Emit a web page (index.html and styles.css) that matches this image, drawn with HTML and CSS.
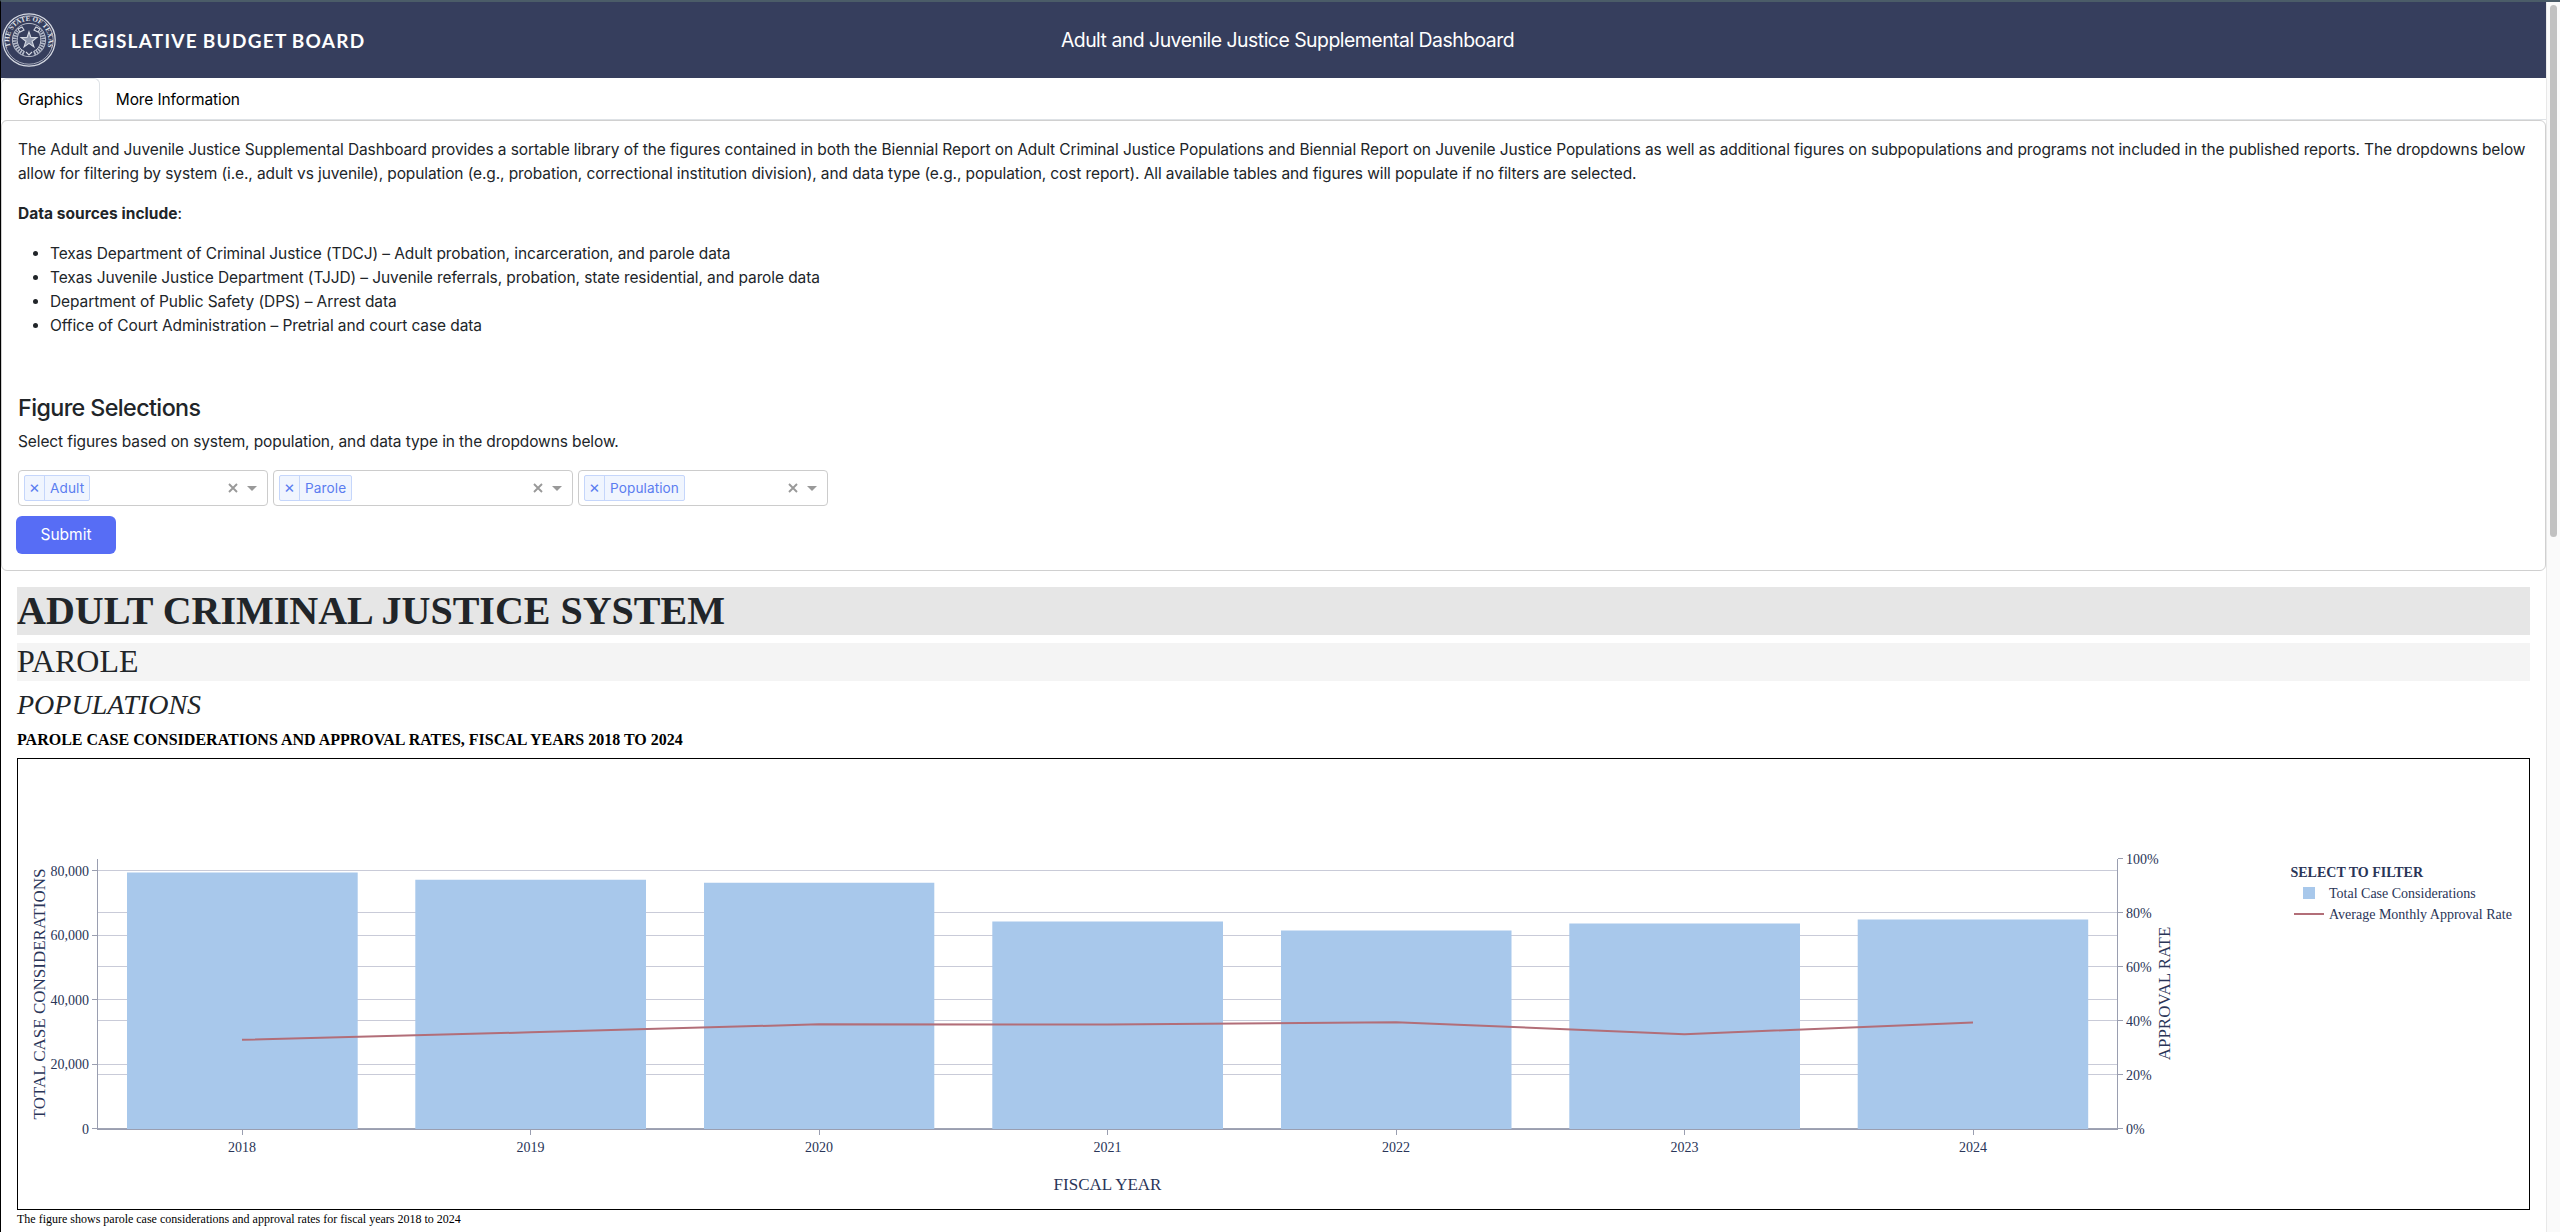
FILE: index.html
```html
<!DOCTYPE html>
<html lang="en">
<head>
<meta charset="utf-8">
<title>Adult and Juvenile Justice Supplemental Dashboard</title>
<link rel="stylesheet" href="styles.css">
</head>
<body>
<div class="app">
  <div class="content">
    <header class="header">
      <div class="brand">
        <svg class="seal" width="56" height="56" viewBox="0 0 56 56" fill="none" stroke="#d5d9e2">
          <circle cx="28" cy="28" r="26.2" stroke-width="1.3"/>
          <circle cx="28" cy="28" r="24.2" stroke-width=".7"/>
          <circle cx="28" cy="28" r="16.6" stroke-width=".8"/>
          <path d="M23 41.5C14 38 10.5 27 16.5 19M33 41.5C42 38 45.500 27 39.500 19" stroke-width="4" stroke-dasharray="1.6 1" stroke="#b4bac9"/>
          <path d="M23.500 39.500C16 36 14 27 18.500 20M32.500 39.500C40 36 42 27 37.500 20" stroke-width=".9"/>
          <path d="M17 17l4-2 2 3-4 2zM39 17l-4-2-2 3 4 2zM25 40l3 3 3-3" stroke-width="1.1"/>
          <path d="M28 19.800l1.900 5.700 6 .1-4.800 3.600 1.800 5.700-4.900-3.500-4.900 3.500 1.800-5.700-4.800-3.600 6-.1z" stroke-width="1.1" fill="#8d95ab"/>
          <path id="sealArc" d="M9.500 34.500A19.500 19.500 0 1 1 46.500 34.500" stroke="none"/>
          <text class="seal-text"><textPath href="#sealArc" textLength="74">THE STATE OF TEXAS</textPath></text>
        </svg>
        <span class="brand-name">LEGISLATIVE BUDGET BOARD</span>
      </div>
      <div class="header-title">Adult and Juvenile Justice Supplemental Dashboard</div>
    </header>

    <nav class="tabs">
      <a class="tab tab-active">Graphics</a>
      <a class="tab">More Information</a>
    </nav>

    <section class="card">
      <p>The Adult and Juvenile Justice Supplemental Dashboard provides a sortable library of the figures contained in both the Biennial Report on Adult Criminal Justice Populations and Biennial Report on Juvenile Justice Populations as well as additional figures on subpopulations and programs not included in the published reports. The dropdowns below allow for filtering by system (i.e., adult vs juvenile), population (e.g., probation, correctional institution division), and data type (e.g., population, cost report). All available tables and figures will populate if no filters are selected.</p>
      <p><strong>Data sources include</strong>:</p>
      <ul class="sources">
        <li>Texas Department of Criminal Justice (TDCJ) – Adult probation, incarceration, and parole data</li>
        <li>Texas Juvenile Justice Department (TJJD) – Juvenile referrals, probation, state residential, and parole data</li>
        <li>Department of Public Safety (DPS) – Arrest data</li>
        <li>Office of Court Administration – Pretrial and court case data</li>
      </ul>
      <h4 class="filters-title">Figure Selections</h4>
      <p>Select figures based on system, population, and data type in the dropdowns below.</p>
      <div class="filters">
        <div class="select">
          <span class="tag"><span class="tag-x">×</span><span class="tag-label">Adult</span></span>
          <svg class="controls" width="32" height="12" viewBox="0 0 32 12"><path d="M2 2l8 8M10 2l-8 8" stroke="#999" stroke-width="1.900"/><path d="M20 4h10l-5 5z" fill="#999"/></svg>
        </div>
        <div class="select select-wide">
          <span class="tag"><span class="tag-x">×</span><span class="tag-label">Parole</span></span>
          <svg class="controls" width="32" height="12" viewBox="0 0 32 12"><path d="M2 2l8 8M10 2l-8 8" stroke="#999" stroke-width="1.900"/><path d="M20 4h10l-5 5z" fill="#999"/></svg>
        </div>
        <div class="select">
          <span class="tag"><span class="tag-x">×</span><span class="tag-label">Population</span></span>
          <svg class="controls" width="32" height="12" viewBox="0 0 32 12"><path d="M2 2l8 8M10 2l-8 8" stroke="#999" stroke-width="1.900"/><path d="M20 4h10l-5 5z" fill="#999"/></svg>
        </div>
      </div>
      <button class="submit">Submit</button>
    </section>

    <main class="report">
      <h1>ADULT CRIMINAL JUSTICE SYSTEM</h1>
      <h2>PAROLE</h2>
      <h3>POPULATIONS</h3>
      <div class="figure-title">PAROLE CASE CONSIDERATIONS AND APPROVAL RATES, FISCAL YEARS 2018 TO 2024</div>
      <div class="figure">
        <svg class="chart" width="2511" height="450" viewBox="18 759 2511 450">
          <path class="grid" d="M98 870.5H2117M98 912.500H2117M98 935.500H2117M98 966.500H2117M98 999.500H2117M98 1020.500H2117M98 1064.500H2117M98 1074.500H2117"/>
          <path class="zero" d="M97 1129H2118"/>
          <g class="bars">
            <path d="M127 872.600h230.700V1129H127z"/>
            <path d="M415.300 879.700H646V1129H415.300z"/>
            <path d="M704 882.700h230.300V1129H704z"/>
            <path d="M992.300 921.400H1223V1129H992.300z"/>
            <path d="M1281 930.500h230.500V1129H1281z"/>
            <path d="M1569.300 923.500H1800V1129H1569.300z"/>
            <path d="M1857.700 919.400h230.500V1129H1857.700z"/>
          </g>
          <path class="axis" d="M97.500 859V1130M2117.500 859V1130M98 1129.500H2117M92 870.500h5M92 935.500h5M92 999.500h5M92 1064.500h5M92 1128.500h5M2118 858.500h5M2118 912.500h5M2118 966.500h5M2118 1020.500h5M2118 1074.500h5M2118 1128.500h5M242.500 1130v5M530.500 1130v5M819.500 1130v5M1107.500 1130v5M1396.500 1130v5M1684.500 1130v5M1973.500 1130v5"/>
          <path class="rate" d="M242 1039.800L530.500 1032.300L819 1024.300L1107.500 1024.500L1396 1022.200L1684.500 1034.200L1973 1022.500"/>
          <g class="tick end">
            <text x="89" y="875.500">80,000</text><text x="89" y="940">60,000</text><text x="89" y="1004.500">40,000</text><text x="89" y="1069">20,000</text><text x="89" y="1133.700">0</text>
          </g>
          <g class="tick">
            <text x="2126" y="863.500">100%</text><text x="2126" y="917.500">80%</text><text x="2126" y="971.500">60%</text><text x="2126" y="1025.500">40%</text><text x="2126" y="1079.500">20%</text><text x="2126" y="1133.500">0%</text>
          </g>
          <g class="tick mid">
            <text x="242" y="1152">2018</text><text x="530.500" y="1152">2019</text><text x="819" y="1152">2020</text><text x="1107.500" y="1152">2021</text><text x="1396" y="1152">2022</text><text x="1684.500" y="1152">2023</text><text x="1973" y="1152">2024</text>
          </g>
          <g class="axis-title mid">
            <text x="1107.500" y="1190">FISCAL YEAR</text>
            <text transform="translate(45 994) rotate(-90)">TOTAL CASE CONSIDERATIONS</text>
            <text transform="translate(2170 993.500) rotate(-90)">APPROVAL RATE</text>
          </g>
          <g class="tick">
            <text class="legend-title" x="2290.500" y="877">SELECT TO FILTER</text>
            <path d="M2303 887h12v12h-12z" fill="#a8c8eb"/>
            <text x="2329" y="898">Total Case Considerations</text>
            <path class="rate" d="M2294 914h30"/>
            <text x="2329" y="919">Average Monthly Approval Rate</text>
          </g>
        </svg>
      </div>
      <div class="caption">The figure shows parole case considerations and approval rates for fiscal years 2018 to 2024</div>
    </main>
  </div>
  <div class="scrollbar"><div class="thumb"></div></div>
</div>
</body>
</html>
```
FILE: styles.css
```css
* { box-sizing: border-box; }

body {
  margin: 0;
  height: 1232px;
  overflow: hidden;
  background: #fff;
  color: #212529;
  font: 15.5px/24px Inter, "Liberation Sans", sans-serif;
  letter-spacing: -0.103px;
}

.app {
  display: flex;
  height: 1232px;
  border-top: 2px solid #4b5c68;
  border-left: 1px solid #000;
  overflow: hidden;
}

.content { width: 2545px; }

.header {
  display: grid;
  grid-template-columns: 1fr auto 1fr;
  align-items: center;
  height: 76px;
  background: #363e5d;
  color: #fff;
}

.brand { display: flex; align-items: center; gap: 14px; }
.seal { display: block; }
.seal-text { font: 700 7px "Liberation Serif", serif; fill: #e3e6ec; stroke: none; letter-spacing: 0; }
.brand-name { font: 700 19px/24px Lato, sans-serif; letter-spacing: 1.25px; word-spacing: -1px; padding-top: 1px; }
.header-title { font-size: 19.4px; letter-spacing: -0.5px; margin-left: 28px; }

.tabs {
  display: flex;
  height: 42px;
  border-bottom: 1px solid #dee2e6;
}
.tab {
  height: 42px;
  padding: 9px 16px 0;
  border: 1px solid transparent;
  border-bottom: 0;
  border-radius: 6px 6px 0 0;
  color: #000;
}
.tab + .tab { padding-left: 15px; }
.tab-active { border-color: #dee2e6; background: #fff; }

.card {
  height: 451px;
  padding: 17px 16px 16px;
  border: 1px solid #d0d0d0;
  border-radius: 6px;
}
.card p { margin: 0 0 16px; }
.card strong { font-weight: 700; letter-spacing: 0.03px; }
.sources { margin: 0 0 16px; padding-left: 32px; letter-spacing: -0.09px; }
.filters-title {
  margin: 55px 0 8px;
  font-size: 23.3px;
  line-height: 29px;
  font-weight: 500;
  letter-spacing: -0.6px;
}
.filters { display: flex; gap: 5px; }
.select {
  display: flex;
  align-items: center;
  justify-content: space-between;
  width: 250px;
  height: 36px;
  padding: 0 8px 0 5px;
  border: 1px solid #ccc;
  border-radius: 4px;
}
.select-wide { width: 300px; }
.tag {
  display: flex;
  height: 26px;
  border: 1px solid #c5d6fb;
  border-radius: 2px;
  background: #f0f5fe;
  color: #5b7df0;
  font-size: 13.6px;
  line-height: 25px;
  letter-spacing: 0.1px;
}
.tag-x { width: 20px; text-align: center; border-right: 1px solid #c5d6fb; font-size: 17px; line-height: 23px; }
.tag-label { padding: 0 5px; }
.controls { display: block; }
.submit {
  display: block;
  width: 100px;
  height: 38px;
  margin: 10px 0 0 -2px;
  padding: 0;
  border: 0;
  border-radius: 6px;
  background: #576df5;
  color: #fff;
  font: inherit;
}

.report {
  padding: 16px 16px 0;
  width: 2545px;
  font-family: "Liberation Serif", "Times New Roman", serif;
  letter-spacing: 0;
}
.report h1, .report h2, .report h3 { margin: 0 0 8px; }
.report h1 { font-size: 40px; height: 48px; line-height: 47px; background: #e6e6e6; }
.report h2 { font-size: 32px; font-weight: 400; height: 38px; line-height: 36px; background: #f4f4f4; }
.report h3 { font-size: 28px; font-weight: 400; font-style: italic; height: 34px; line-height: 32px; }
.figure-title { height: 27px; line-height: 18px; font-size: 16px; font-weight: 700; color: #000; }
.figure { border: 1px solid #000; height: 452px; }
.chart { display: block; }
.caption { font-size: 12px; line-height: 18px; color: #000; }

.grid { stroke: #c9cbd8; }
.zero { stroke: #a0a4b4; stroke-width: 2; }
.axis { stroke: #9a9eb0; fill: none; }
.bars { fill: #a8c8eb; }
.rate { fill: none; stroke: #b26e78; stroke-width: 2; }
.tick, .axis-title { fill: #2a3558; font-size: 14px; }
.axis-title { font-size: 17px; }
.end { text-anchor: end; }
.mid { text-anchor: middle; }
.legend-title { font-weight: 700; }

.scrollbar {
  width: 14px;
  border-left: 1px solid #e8e8e8;
  background: #fafafa;
  padding: 3px 0 0 3px;
}
.thumb { width: 7px; height: 532px; border-radius: 4px; background: #c1c1c1; }
```
